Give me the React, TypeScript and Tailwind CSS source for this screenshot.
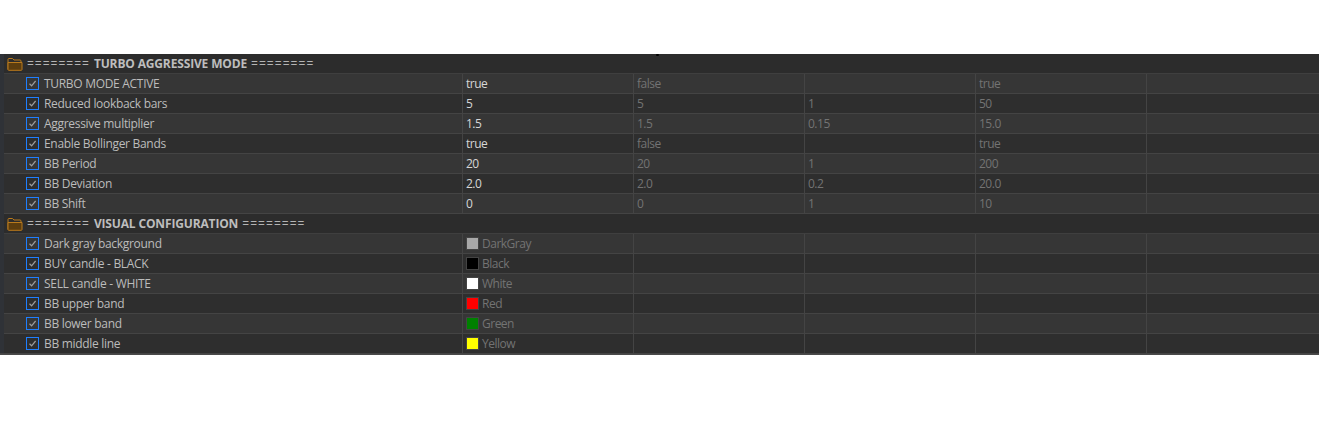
import React from 'react';

const FolderIcon = () => (
  <svg width="16" height="14" viewBox="0 0 16 14" className="shrink-0">
    <path d="M1 12.5V2.5a1 1 0 0 1 1-1h3.5l1.5 1.5h6a1 1 0 0 1 1 1v1" fill="none" stroke="#b97a1c" strokeWidth="1" />
    <path d="M1 5.5h14v7a.8.8 0 0 1-.8.8H1.8a.8.8 0 0 1-.8-.8z" fill="#5c3d0e" stroke="#b97a1c" strokeWidth="1" />
  </svg>
);

const CheckBox = () => (
  <span className="w-[13px] h-[13px] -ml-px shrink-0 border border-solid border-[#1f7fff] flex items-center justify-center">
    <svg width="9" height="9" viewBox="0 0 9 9">
      <path d="M1.5 4.8 3.6 6.8 7.6 2" fill="none" stroke="#9c9c9c" strokeWidth="1.2" />
    </svg>
  </span>
);

type Row = { name: string; value: string; start?: string; step?: string; stop?: string; color?: string };

const turboRows: Row[] = [
  { name: 'TURBO MODE ACTIVE', value: 'true', start: 'false', step: '', stop: 'true' },
  { name: 'Reduced lookback bars', value: '5', start: '5', step: '1', stop: '50' },
  { name: 'Aggressive multiplier', value: '1.5', start: '1.5', step: '0.15', stop: '15.0' },
  { name: 'Enable Bollinger Bands', value: 'true', start: 'false', step: '', stop: 'true' },
  { name: 'BB Period', value: '20', start: '20', step: '1', stop: '200' },
  { name: 'BB Deviation', value: '2.0', start: '2.0', step: '0.2', stop: '20.0' },
  { name: 'BB Shift', value: '0', start: '0', step: '1', stop: '10' },
];

const visualRows: Row[] = [
  { name: 'Dark gray background', value: 'DarkGray', color: 'bg-[#a9a9a9]' },
  { name: 'BUY candle - BLACK', value: 'Black', color: 'bg-black' },
  { name: 'SELL candle - WHITE', value: 'White', color: 'bg-white' },
  { name: 'BB upper band', value: 'Red', color: 'bg-[#ff0000]' },
  { name: 'BB lower band', value: 'Green', color: 'bg-[#008000]' },
  { name: 'BB middle line', value: 'Yellow', color: 'bg-[#ffff00]' },
];

const GroupRow = ({ title }: { title: string }) => (
  <div className="h-5 flex items-center gap-[4px] pl-[7px] bg-[#2c2c2c] border-b border-[#3f3f3f] text-[#b4b4b4]">
    <FolderIcon />
    <span className="tracking-[1px]">========</span>
    <span className="font-bold text-[#bdbdbd] tracking-[-0.15px]">{title}</span>
    <span className="tracking-[1.05px]">========</span>
  </div>
);

const Cell = ({ children, strong }: { children?: React.ReactNode; strong?: boolean }) => (
  <div className={`w-[171px] shrink-0 h-full flex items-center gap-[3px] pl-[3px] border-r border-[#444444] tracking-[-0.5px] ${strong ? 'text-[#d6d6d6]' : 'text-[#737373]'}`}>
    {children}
  </div>
);

const ParamRow = ({ row, odd }: { row: Row; odd: boolean }) => (
  <div className={`h-5 flex border-b border-[#444444] ${odd ? 'bg-[#363636]' : 'bg-[#2e2e2e]'}`}>
    <div className="w-[463px] shrink-0 h-full flex items-center gap-[5px] pl-[27px] border-r border-[#444444] text-[#bcbcbc] tracking-[-0.3px]">
      <CheckBox />
      <span>{row.name}</span>
    </div>
    {row.color ? (
      <Cell>
        <span className={`w-[13px] h-[13px] shrink-0 border border-[#444444] ${row.color}`} />
        {row.value}
      </Cell>
    ) : (
      <Cell strong>{row.value}</Cell>
    )}
    <Cell>{row.start}</Cell>
    <Cell>{row.step}</Cell>
    <Cell>{row.stop}</Cell>
    <div className="flex-1" />
  </div>
);

export default function App() {
  return (
    <div className="w-[1319px] h-[440px] bg-white pt-[54px] overflow-hidden font-['Open_Sans','Noto_Sans',sans-serif] text-[12px] leading-none">
      <div className="relative h-[301px] bg-[#2c2c2c] border-b-2 border-[#4a4a4a]">
        <GroupRow title="TURBO AGGRESSIVE MODE" />
        {turboRows.map((row, i) => (
          <ParamRow key={row.name} row={row} odd={i % 2 === 0} />
        ))}
        <GroupRow title="VISUAL CONFIGURATION" />
        {visualRows.map((row, i) => (
          <ParamRow key={row.name} row={row} odd={i % 2 === 0} />
        ))}
        {/* left gutter strip runs over the rows */}
        <span className="absolute left-0 top-0 bottom-0 w-[4px] bg-[#2f3237]" />
        <span className="absolute left-[656px] top-0 w-[3px] h-[2px] rounded-full bg-black" />
      </div>
    </div>
  );
}
